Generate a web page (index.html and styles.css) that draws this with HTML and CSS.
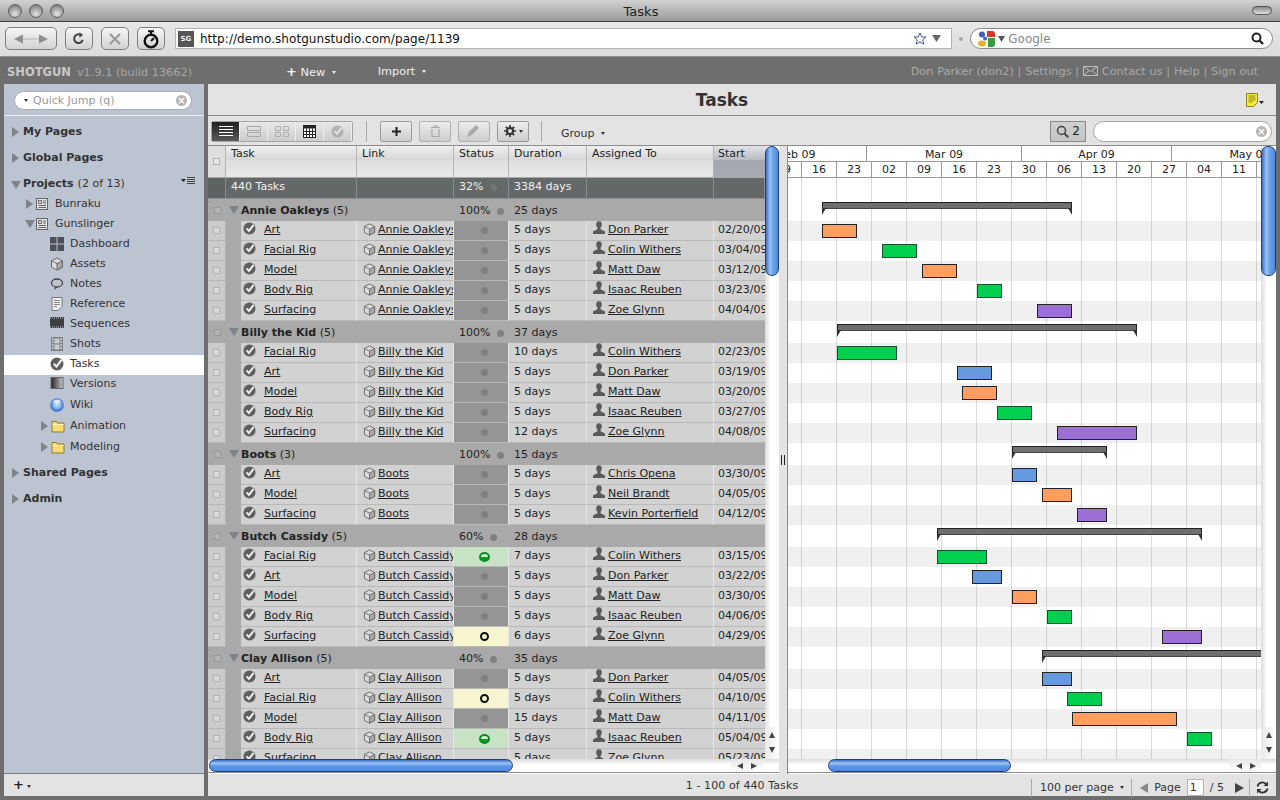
FILE: index.html
```html
<!DOCTYPE html>
<html lang="en">
<head>
<meta charset="utf-8">
<title>Tasks</title>
<link rel="stylesheet" href="styles.css">
</head>
<body>
<svg class="sprite" width="0" height="0" aria-hidden="true">
  <symbol id="check" viewBox="0 0 14 14"><circle cx="7" cy="7" r="6.500" fill="#5f5f5f"/><path d="M3.800 6.800l2.600 2.800L11.500 3" fill="none" stroke="#eee" stroke-width="2.100"/></symbol>
  <symbol id="cube" viewBox="0 0 14 14"><path d="M7 1l5.500 2.800v6.400L7 13l-5.500-2.800V3.800z" fill="#dcdcdc" stroke="#6a6a6a"/><path d="M7 6.600l5.500-2.800v6.400L7 13z" fill="#a8a8a8" stroke="#6a6a6a"/><path d="M1.500 3.800L7 6.600" fill="none" stroke="#6a6a6a"/></symbol>
  <symbol id="user" viewBox="0 0 14 14"><ellipse cx="7" cy="3.400" rx="2.800" ry="3.200" fill="#5a5a5a"/><path d="M5.400 6h3.200v2.200l4.400 2.200V13H1v-2.600l4.400-2.200z" fill="#5a5a5a"/></symbol>
  <symbol id="folder" viewBox="0 0 14 14"><path d="M1 2.500h4.500l1 1.500H13v9H1z" fill="#f8dc70" stroke="#8b7a36"/><path d="M1.500 5.500h11" stroke="#fff3b5"/></symbol>
  <symbol id="proj" viewBox="0 0 12 12"><rect x=".5" y=".5" width="11" height="11" fill="#e0e2e6" stroke="#666"/><path d="M2.500 2.500h3v3h-3zM7 3h3M7 5h3M2.500 7.500h7.500M2.500 9.500h7.500" stroke="#666" fill="none"/></symbol>
  <symbol id="tri-r" viewBox="0 0 8 10"><path d="M1 0l7 5-7 5z" fill="#7f838a"/></symbol>
  <symbol id="tri-d" viewBox="0 0 10 8"><path d="M0 0h10L5 8z" fill="#7f838a"/></symbol>
</svg>

<header class="titlebar">
  <div class="lights"><i class="light"></i><i class="light"></i><i class="light"></i></div>
  <div class="wintitle">Tasks</div>
  <i class="winpill"></i>
</header>

<nav class="browserbar">
  <div class="bbtn bb-hist">
    <svg width="34" height="10" viewBox="0 0 34 10"><path d="M9 4.500h16v1H9z" fill="#b4b4b4"/><path d="M0 5l9-4.500v9zM34 5l-9-4.500v9z" fill="#8e8e8e"/></svg>
  </div>
  <div class="bbtn bb-reload"><svg width="13" height="13" viewBox="0 0 14 14"><path d="M11.500 8.500A4.700 4.700 0 1 1 9.500 3.200" fill="none" stroke="#444" stroke-width="2.200"/><path d="M8 .2v6l4-3z" fill="#444"/></svg></div>
  <div class="bbtn bb-stop"><svg width="14" height="14" viewBox="0 0 14 14"><path d="M2 2l10 10M12 2L2 12" stroke="#9a9a9a" stroke-width="2.200"/></svg></div>
  <div class="bbtn bb-timer"><svg width="18" height="20" viewBox="0 0 18 20"><circle cx="9" cy="12" r="6.300" fill="none" stroke="#111" stroke-width="2.400"/><path d="M6 2.200h6M9 2.500v3M9 12l3-3" stroke="#111" stroke-width="2"/></svg></div>
  <div class="urlbar">
    <span class="favicon">SG</span>
    <span class="urltext">http://demo.shotgunstudio.com/page/1139</span>
    <svg class="star" width="14" height="14" viewBox="0 0 14 14"><path d="M7 1l1.800 4h4.200l-3.300 2.800 1.200 4.400L7 9.800l-3.900 2.400 1.200-4.400L1 5h4.200z" fill="#fff" stroke="#3d5a9e"/></svg>
    <svg class="urlcaret" width="9" height="7" viewBox="0 0 9 7"><path d="M0 0h9L4.500 7z" fill="#666"/></svg>
  </div>
  <i class="bb-dot"></i>
  <div class="googlebar">
    <svg width="18" height="16" viewBox="0 0 18 16"><rect x="0" y="0" width="18" height="16" rx="3" fill="#fff"/><path d="M10 0h5a3 3 0 0 1 3 3v3h-8z" fill="#d9332b"/><path d="M11 7h7v6a3 3 0 0 1-3 3h-4z" fill="#3b9a3e"/><circle cx="5" cy="3.500" r="3" fill="#3b62c4"/><circle cx="8" cy="7.500" r="2" fill="#3b62c4"/><ellipse cx="5" cy="12.500" rx="4" ry="3" fill="#eab12c"/></svg>
    <svg width="7" height="6" viewBox="0 0 7 6"><path d="M0 0h7L3.500 6z" fill="#555"/></svg>
    <span class="googletext">Google</span>
    <svg class="gmag" width="13" height="13" viewBox="0 0 13 13"><circle cx="5.500" cy="5.500" r="4" fill="none" stroke="#222" stroke-width="2"/><path d="M8.500 8.500l3.500 3.500" stroke="#222" stroke-width="2.400"/></svg>
  </div>
</nav>

<div class="app">
  <div class="appheader">
    <div class="brand"><b>SHOTGUN</b><span class="ver">v1.9.1 (build 13662)</span></div>
    <div class="appnav"><span class="nav-new"><b class="plus">+</b> New <i class="mini-caret"></i></span><span class="nav-import">Import <i class="mini-caret"></i></span></div>
    <div class="usernav">Don Parker (don2) | Settings | <svg class="mail" width="15" height="10" viewBox="0 0 15 10"><path d="M.5.500h14v9H.5zM.5.500L7.500 5.500 14.500.500M.5 9.500L6 4.500M14.500 9.500L9 4.500" fill="none" stroke="#bdbdbd"/></svg> Contact us | Help | Sign out</div>
  </div>

  <div class="workspace">
    <aside class="sidebar">
      <div class="side-top">
        <div class="quick"><i class="mini-caret dark"></i><span class="quick-text">Quick Jump (q)</span><i class="clear">×</i></div>
      </div>
      <div class="tree">
        <div class="sec"><svg class="arrow" width="8" height="10"><use href="#tri-r"/></svg><b>My Pages</b></div>
        <div class="sec"><svg class="arrow" width="8" height="10"><use href="#tri-r"/></svg><b>Global Pages</b></div>
        <div class="sec sec-open"><svg class="arrow" width="10" height="8"><use href="#tri-d"/></svg><b>Projects</b><span class="sec-count">(2 of 13)</span>
          <svg class="listmenu" width="14" height="9" viewBox="0 0 14 9"><path d="M0 2h5L2.500 5z" fill="#222"/><path d="M6 .5h8M6 2.500h8M6 4.500h8M6 6.500h8" stroke="#444"/></svg></div>
        <div class="node n-proj"><svg class="arrow" width="8" height="10"><use href="#tri-r"/></svg><svg class="nicon-s" width="12" height="12"><use href="#proj"/></svg>Bunraku</div>
        <div class="node n-proj"><svg class="arrow" width="10" height="8"><use href="#tri-d"/></svg><svg class="nicon-s" width="12" height="12"><use href="#proj"/></svg>Gunslinger</div>
        <div class="node"><svg class="nicon" width="14" height="14" viewBox="0 0 14 14"><path d="M0 0h6.500v6.500H0zM7.500 0H14v6.500H7.500zM0 7.500h6.500V14H0zM7.500 7.500H14V14H7.500z" fill="#4c5058"/></svg>Dashboard</div>
        <div class="node"><svg class="nicon" width="14" height="14"><use href="#cube"/></svg>Assets</div>
        <div class="node"><svg class="nicon" width="14" height="14" viewBox="0 0 14 14"><ellipse cx="7" cy="6" rx="5.500" ry="4" fill="none" stroke="#444" stroke-width="1.300"/><path d="M5 10l-.5 3 3-3" fill="#444"/></svg>Notes</div>
        <div class="node"><svg class="nicon" width="14" height="14" viewBox="0 0 14 14"><path d="M2 .5h10v9l-4 4H2z" fill="#eceef0" stroke="#777"/><path d="M4 3.500h6M4 5.500h6M4 7.500h6M4 9.500h3" stroke="#888"/></svg>Reference</div>
        <div class="node"><svg class="nicon" width="14" height="11" viewBox="0 0 14 11"><rect width="14" height="11" fill="#3c3e42"/><path d="M0 1h14M0 10h14" stroke="#cdd0d6" stroke-dasharray="1 1"/></svg>Sequences</div>
        <div class="node"><svg class="nicon" width="14" height="14" viewBox="0 0 14 14"><rect x="1" y="0" width="12" height="14" fill="#7c7f85"/><path d="M2 2h1.500M2 5h1.500M2 8h1.500M2 11h1.500M10.500 2H12M10.500 5H12M10.500 8H12M10.500 11H12" stroke="#e2e4e8" stroke-width="1.400"/><rect x="4.500" y="1.500" width="5" height="5" fill="#c8cbd1"/><rect x="4.500" y="7.500" width="5" height="5" fill="#c8cbd1"/></svg>Shots</div>
        <div class="node is-current"><svg class="nicon" width="14" height="14"><use href="#check"/></svg>Tasks</div>
        <div class="node"><svg class="nicon" width="13" height="12" viewBox="0 0 13 12"><defs><linearGradient id="vg"><stop offset="0" stop-color="#222"/><stop offset="1" stop-color="#c8c8c8"/></linearGradient></defs><rect x=".5" y=".5" width="12" height="11" fill="url(#vg)" stroke="#666"/></svg>Versions</div>
        <div class="node node-tall"><svg class="nicon" width="14" height="14" viewBox="0 0 14 14"><defs><radialGradient id="wg" cx=".5" cy=".45" r=".55"><stop offset="0" stop-color="#d8e9fb"/><stop offset=".55" stop-color="#7fb0ea"/><stop offset="1" stop-color="#1f5fc0"/></radialGradient></defs><circle cx="7" cy="7" r="6.800" fill="url(#wg)"/><ellipse cx="7" cy="3.500" rx="3.500" ry="1.800" fill="#eef6ff" opacity=".8"/></svg>Wiki</div>
        <div class="node node-tall n-folder"><svg class="arrow" width="8" height="10"><use href="#tri-r"/></svg><svg class="nicon-f" width="14" height="14"><use href="#folder"/></svg>Animation</div>
        <div class="node node-tall n-folder"><svg class="arrow" width="8" height="10"><use href="#tri-r"/></svg><svg class="nicon-f" width="14" height="14"><use href="#folder"/></svg>Modeling</div>
        <div class="sec sec-after"><svg class="arrow" width="8" height="10"><use href="#tri-r"/></svg><b>Shared Pages</b></div>
        <div class="sec"><svg class="arrow" width="8" height="10"><use href="#tri-r"/></svg><b>Admin</b></div>
      </div>
      <div class="side-foot"><b class="plus">+</b><i class="mini-caret dark"></i></div>
    </aside>

    <main class="content">
      <div class="pagetitle"><h1>Tasks</h1>
        <svg class="noteicon" width="18" height="14" viewBox="0 0 18 14"><path d="M.5.500h11v9l-4 4h-7z" fill="#f4ec3c" stroke="#8a8420"/><path d="M2.500 3h7M2.500 5h7M2.500 7h7M2.500 9h4" stroke="#8a8420"/><path d="M13 8h5l-2.500 3z" fill="#222"/></svg>
      </div>
      <div class="toolbar">
        <div class="seg">
          <span class="segb on"><svg width="14" height="11" viewBox="0 0 14 11"><path d="M0 .5h14M0 3.500h14M0 6.500h14M0 9.500h14" stroke="#fff"/></svg></span>
          <span class="segb"><svg width="14" height="11" viewBox="0 0 14 11"><path d="M.5.500h13v4H.5zM.5 6.500h13v4H.5z" fill="none" stroke="#a8a8a8"/></svg></span>
          <span class="segb"><svg width="14" height="11" viewBox="0 0 14 11"><path d="M.5.500h5v4h-5zM8.500.500h5v4h-5zM.5 6.500h5v4h-5zM8.500 6.500h5v4h-5z" fill="none" stroke="#b0b0b0"/></svg></span>
          <span class="segb"><svg width="13" height="13" viewBox="0 0 13 13"><rect x=".5" y=".5" width="12" height="12" fill="#fff" stroke="#222"/><rect x=".5" y=".5" width="12" height="3" fill="#222"/><path d="M3.500 3.500v9M6.500 3.500v9M9.500 3.500v9M.5 6.500h12M.5 9.500h12" stroke="#222"/></svg></span>
          <span class="segb"><svg width="13" height="13"><use href="#check" opacity=".32"/></svg></span>
        </div>
        <i class="tsep tsep-1"></i>
        <span class="tbtn"><svg width="11" height="11" viewBox="0 0 11 11"><path d="M5.500 1v9M1 5.500h9" stroke="#222" stroke-width="2"/></svg></span>
        <span class="tbtn off"><svg width="11" height="12" viewBox="0 0 11 12"><path d="M1 2.500h9M4 2.500V1h3v1.500M2 4v7.500h7V4" fill="none" stroke="#a8a8a8" stroke-width="1.200"/></svg></span>
        <span class="tbtn off"><svg width="16" height="14" viewBox="0 0 16 14"><path d="M1 13l2-5 7-7 3 3-7 7z" fill="#a8a8a8"/></svg></span>
        <span class="tbtn tbtn-gear"><svg width="12" height="12" viewBox="0 0 13 13"><circle cx="6.500" cy="6.500" r="3.300" fill="none" stroke="#333" stroke-width="2.200"/><path d="M6.500 0v3M6.500 10v3M0 6.500h3M10 6.500h3M1.900 1.900L4 4M9 9l2.100 2.100M11.100 1.900L9 4M4 9l-2.100 2.100" stroke="#333" stroke-width="1.800"/></svg><i class="mini-caret dark"></i></span>
        <i class="tsep tsep-2"></i>
        <span class="groupbtn">Group <i class="mini-caret dark"></i></span>
        <span class="tb-right">
          <span class="findbtn"><svg width="13" height="13" viewBox="0 0 13 13"><circle cx="5.500" cy="5.500" r="4" fill="none" stroke="#444" stroke-width="1.500"/><path d="M8.500 8.500l3.800 3.800" stroke="#444" stroke-width="2"/></svg>2</span>
          <span class="findbox"><i class="clear">×</i></span>
        </span>
      </div>

      <div class="panes">
        <section class="grid-pane">
          <div class="grid-view">
            <div class="row r-head">
              <div class="c c-chk"><i class="box"></i></div>
              <div class="c c-headtask">Task</div>
              <div class="c">Link</div><div class="c">Status</div><div class="c">Duration</div><div class="c">Assigned To</div><div class="c c-sorted">Start</div>
            </div>
            <div class="row r-sum">
              <div class="c c-chk"></div>
              <div class="c c-headtask">440 Tasks</div>
              <div class="c"></div><div class="c">32% <i class="gdot faint"></i></div><div class="c">3384 days</div><div class="c"></div><div class="c c-start"></div>
            </div>

            <div class="row r-group"><div class="c c-chk"><i class="box"></i></div><div class="c c-gname"><svg class="gtri" width="10" height="8"><use href="#tri-d"/></svg><b>Annie Oakleys</b> (5)</div><div class="c c-gstat">100% <i class="gdot"></i></div><div class="c">25 days</div></div>
            <div class="row"><div class="c c-chk"><i class="box"></i></div><div class="c c-ind"></div><div class="c c-task"><svg width="14" height="14"><use href="#check"/></svg><a>Art</a></div><div class="c c-link"><svg width="14" height="14"><use href="#cube"/></svg><a>Annie Oakleys</a></div><div class="c st st-na"><i></i></div><div class="c">5 days</div><div class="c c-who"><svg width="14" height="14"><use href="#user"/></svg><a>Don Parker</a></div><div class="c c-start">02/20/09</div></div>
            <div class="row"><div class="c c-chk"><i class="box"></i></div><div class="c c-ind"></div><div class="c c-task"><svg width="14" height="14"><use href="#check"/></svg><a>Facial Rig</a></div><div class="c c-link"><svg width="14" height="14"><use href="#cube"/></svg><a>Annie Oakleys</a></div><div class="c st st-na"><i></i></div><div class="c">5 days</div><div class="c c-who"><svg width="14" height="14"><use href="#user"/></svg><a>Colin Withers</a></div><div class="c c-start">03/04/09</div></div>
            <div class="row"><div class="c c-chk"><i class="box"></i></div><div class="c c-ind"></div><div class="c c-task"><svg width="14" height="14"><use href="#check"/></svg><a>Model</a></div><div class="c c-link"><svg width="14" height="14"><use href="#cube"/></svg><a>Annie Oakleys</a></div><div class="c st st-na"><i></i></div><div class="c">5 days</div><div class="c c-who"><svg width="14" height="14"><use href="#user"/></svg><a>Matt Daw</a></div><div class="c c-start">03/12/09</div></div>
            <div class="row"><div class="c c-chk"><i class="box"></i></div><div class="c c-ind"></div><div class="c c-task"><svg width="14" height="14"><use href="#check"/></svg><a>Body Rig</a></div><div class="c c-link"><svg width="14" height="14"><use href="#cube"/></svg><a>Annie Oakleys</a></div><div class="c st st-na"><i></i></div><div class="c">5 days</div><div class="c c-who"><svg width="14" height="14"><use href="#user"/></svg><a>Isaac Reuben</a></div><div class="c c-start">03/23/09</div></div>
            <div class="row"><div class="c c-chk"><i class="box"></i></div><div class="c c-ind"></div><div class="c c-task"><svg width="14" height="14"><use href="#check"/></svg><a>Surfacing</a></div><div class="c c-link"><svg width="14" height="14"><use href="#cube"/></svg><a>Annie Oakleys</a></div><div class="c st st-na"><i></i></div><div class="c">5 days</div><div class="c c-who"><svg width="14" height="14"><use href="#user"/></svg><a>Zoe Glynn</a></div><div class="c c-start">04/04/09</div></div>

            <div class="row r-group"><div class="c c-chk"><i class="box"></i></div><div class="c c-gname"><svg class="gtri" width="10" height="8"><use href="#tri-d"/></svg><b>Billy the Kid</b> (5)</div><div class="c c-gstat">100% <i class="gdot"></i></div><div class="c">37 days</div></div>
            <div class="row"><div class="c c-chk"><i class="box"></i></div><div class="c c-ind"></div><div class="c c-task"><svg width="14" height="14"><use href="#check"/></svg><a>Facial Rig</a></div><div class="c c-link"><svg width="14" height="14"><use href="#cube"/></svg><a>Billy the Kid</a></div><div class="c st st-na"><i></i></div><div class="c">10 days</div><div class="c c-who"><svg width="14" height="14"><use href="#user"/></svg><a>Colin Withers</a></div><div class="c c-start">02/23/09</div></div>
            <div class="row"><div class="c c-chk"><i class="box"></i></div><div class="c c-ind"></div><div class="c c-task"><svg width="14" height="14"><use href="#check"/></svg><a>Art</a></div><div class="c c-link"><svg width="14" height="14"><use href="#cube"/></svg><a>Billy the Kid</a></div><div class="c st st-na"><i></i></div><div class="c">5 days</div><div class="c c-who"><svg width="14" height="14"><use href="#user"/></svg><a>Don Parker</a></div><div class="c c-start">03/19/09</div></div>
            <div class="row"><div class="c c-chk"><i class="box"></i></div><div class="c c-ind"></div><div class="c c-task"><svg width="14" height="14"><use href="#check"/></svg><a>Model</a></div><div class="c c-link"><svg width="14" height="14"><use href="#cube"/></svg><a>Billy the Kid</a></div><div class="c st st-na"><i></i></div><div class="c">5 days</div><div class="c c-who"><svg width="14" height="14"><use href="#user"/></svg><a>Matt Daw</a></div><div class="c c-start">03/20/09</div></div>
            <div class="row"><div class="c c-chk"><i class="box"></i></div><div class="c c-ind"></div><div class="c c-task"><svg width="14" height="14"><use href="#check"/></svg><a>Body Rig</a></div><div class="c c-link"><svg width="14" height="14"><use href="#cube"/></svg><a>Billy the Kid</a></div><div class="c st st-na"><i></i></div><div class="c">5 days</div><div class="c c-who"><svg width="14" height="14"><use href="#user"/></svg><a>Isaac Reuben</a></div><div class="c c-start">03/27/09</div></div>
            <div class="row"><div class="c c-chk"><i class="box"></i></div><div class="c c-ind"></div><div class="c c-task"><svg width="14" height="14"><use href="#check"/></svg><a>Surfacing</a></div><div class="c c-link"><svg width="14" height="14"><use href="#cube"/></svg><a>Billy the Kid</a></div><div class="c st st-na"><i></i></div><div class="c">12 days</div><div class="c c-who"><svg width="14" height="14"><use href="#user"/></svg><a>Zoe Glynn</a></div><div class="c c-start">04/08/09</div></div>

            <div class="row r-group"><div class="c c-chk"><i class="box"></i></div><div class="c c-gname"><svg class="gtri" width="10" height="8"><use href="#tri-d"/></svg><b>Boots</b> (3)</div><div class="c c-gstat">100% <i class="gdot"></i></div><div class="c">15 days</div></div>
            <div class="row"><div class="c c-chk"><i class="box"></i></div><div class="c c-ind"></div><div class="c c-task"><svg width="14" height="14"><use href="#check"/></svg><a>Art</a></div><div class="c c-link"><svg width="14" height="14"><use href="#cube"/></svg><a>Boots</a></div><div class="c st st-na"><i></i></div><div class="c">5 days</div><div class="c c-who"><svg width="14" height="14"><use href="#user"/></svg><a>Chris Opena</a></div><div class="c c-start">03/30/09</div></div>
            <div class="row"><div class="c c-chk"><i class="box"></i></div><div class="c c-ind"></div><div class="c c-task"><svg width="14" height="14"><use href="#check"/></svg><a>Model</a></div><div class="c c-link"><svg width="14" height="14"><use href="#cube"/></svg><a>Boots</a></div><div class="c st st-na"><i></i></div><div class="c">5 days</div><div class="c c-who"><svg width="14" height="14"><use href="#user"/></svg><a>Neil Brandt</a></div><div class="c c-start">04/05/09</div></div>
            <div class="row"><div class="c c-chk"><i class="box"></i></div><div class="c c-ind"></div><div class="c c-task"><svg width="14" height="14"><use href="#check"/></svg><a>Surfacing</a></div><div class="c c-link"><svg width="14" height="14"><use href="#cube"/></svg><a>Boots</a></div><div class="c st st-na"><i></i></div><div class="c">5 days</div><div class="c c-who"><svg width="14" height="14"><use href="#user"/></svg><a>Kevin Porterfield</a></div><div class="c c-start">04/12/09</div></div>

            <div class="row r-group"><div class="c c-chk"><i class="box"></i></div><div class="c c-gname"><svg class="gtri" width="10" height="8"><use href="#tri-d"/></svg><b>Butch Cassidy</b> (5)</div><div class="c c-gstat">60% <i class="gdot"></i></div><div class="c">28 days</div></div>
            <div class="row"><div class="c c-chk"><i class="box"></i></div><div class="c c-ind"></div><div class="c c-task"><svg width="14" height="14"><use href="#check"/></svg><a>Facial Rig</a></div><div class="c c-link"><svg width="14" height="14"><use href="#cube"/></svg><a>Butch Cassidy</a></div><div class="c st st-ip"><i></i></div><div class="c">7 days</div><div class="c c-who"><svg width="14" height="14"><use href="#user"/></svg><a>Colin Withers</a></div><div class="c c-start">03/15/09</div></div>
            <div class="row"><div class="c c-chk"><i class="box"></i></div><div class="c c-ind"></div><div class="c c-task"><svg width="14" height="14"><use href="#check"/></svg><a>Art</a></div><div class="c c-link"><svg width="14" height="14"><use href="#cube"/></svg><a>Butch Cassidy</a></div><div class="c st st-na"><i></i></div><div class="c">5 days</div><div class="c c-who"><svg width="14" height="14"><use href="#user"/></svg><a>Don Parker</a></div><div class="c c-start">03/22/09</div></div>
            <div class="row"><div class="c c-chk"><i class="box"></i></div><div class="c c-ind"></div><div class="c c-task"><svg width="14" height="14"><use href="#check"/></svg><a>Model</a></div><div class="c c-link"><svg width="14" height="14"><use href="#cube"/></svg><a>Butch Cassidy</a></div><div class="c st st-na"><i></i></div><div class="c">5 days</div><div class="c c-who"><svg width="14" height="14"><use href="#user"/></svg><a>Matt Daw</a></div><div class="c c-start">03/30/09</div></div>
            <div class="row"><div class="c c-chk"><i class="box"></i></div><div class="c c-ind"></div><div class="c c-task"><svg width="14" height="14"><use href="#check"/></svg><a>Body Rig</a></div><div class="c c-link"><svg width="14" height="14"><use href="#cube"/></svg><a>Butch Cassidy</a></div><div class="c st st-na"><i></i></div><div class="c">5 days</div><div class="c c-who"><svg width="14" height="14"><use href="#user"/></svg><a>Isaac Reuben</a></div><div class="c c-start">04/06/09</div></div>
            <div class="row"><div class="c c-chk"><i class="box"></i></div><div class="c c-ind"></div><div class="c c-task"><svg width="14" height="14"><use href="#check"/></svg><a>Surfacing</a></div><div class="c c-link"><svg width="14" height="14"><use href="#cube"/></svg><a>Butch Cassidy</a></div><div class="c st st-wt"><i></i></div><div class="c">6 days</div><div class="c c-who"><svg width="14" height="14"><use href="#user"/></svg><a>Zoe Glynn</a></div><div class="c c-start">04/29/09</div></div>

            <div class="row r-group"><div class="c c-chk"><i class="box"></i></div><div class="c c-gname"><svg class="gtri" width="10" height="8"><use href="#tri-d"/></svg><b>Clay Allison</b> (5)</div><div class="c c-gstat">40% <i class="gdot"></i></div><div class="c">35 days</div></div>
            <div class="row"><div class="c c-chk"><i class="box"></i></div><div class="c c-ind"></div><div class="c c-task"><svg width="14" height="14"><use href="#check"/></svg><a>Art</a></div><div class="c c-link"><svg width="14" height="14"><use href="#cube"/></svg><a>Clay Allison</a></div><div class="c st st-na"><i></i></div><div class="c">5 days</div><div class="c c-who"><svg width="14" height="14"><use href="#user"/></svg><a>Don Parker</a></div><div class="c c-start">04/05/09</div></div>
            <div class="row"><div class="c c-chk"><i class="box"></i></div><div class="c c-ind"></div><div class="c c-task"><svg width="14" height="14"><use href="#check"/></svg><a>Facial Rig</a></div><div class="c c-link"><svg width="14" height="14"><use href="#cube"/></svg><a>Clay Allison</a></div><div class="c st st-wt"><i></i></div><div class="c">5 days</div><div class="c c-who"><svg width="14" height="14"><use href="#user"/></svg><a>Colin Withers</a></div><div class="c c-start">04/10/09</div></div>
            <div class="row"><div class="c c-chk"><i class="box"></i></div><div class="c c-ind"></div><div class="c c-task"><svg width="14" height="14"><use href="#check"/></svg><a>Model</a></div><div class="c c-link"><svg width="14" height="14"><use href="#cube"/></svg><a>Clay Allison</a></div><div class="c st st-na"><i></i></div><div class="c">15 days</div><div class="c c-who"><svg width="14" height="14"><use href="#user"/></svg><a>Matt Daw</a></div><div class="c c-start">04/11/09</div></div>
            <div class="row"><div class="c c-chk"><i class="box"></i></div><div class="c c-ind"></div><div class="c c-task"><svg width="14" height="14"><use href="#check"/></svg><a>Body Rig</a></div><div class="c c-link"><svg width="14" height="14"><use href="#cube"/></svg><a>Clay Allison</a></div><div class="c st st-ip"><i></i></div><div class="c">5 days</div><div class="c c-who"><svg width="14" height="14"><use href="#user"/></svg><a>Isaac Reuben</a></div><div class="c c-start">05/04/09</div></div>
            <div class="row"><div class="c c-chk"><i class="box"></i></div><div class="c c-ind"></div><div class="c c-task"><svg width="14" height="14"><use href="#check"/></svg><a>Surfacing</a></div><div class="c c-link"><svg width="14" height="14"><use href="#cube"/></svg><a>Clay Allison</a></div><div class="c st"><span>-</span></div><div class="c">5 days</div><div class="c c-who"><svg width="14" height="14"><use href="#user"/></svg><a>Zoe Glynn</a></div><div class="c c-start">05/23/09</div></div>
          </div>
          <div class="vbar"><span class="vthumb"></span><span class="vbtns"><i class="up"></i><i class="down"></i></span></div>
          <div class="hbar hbar-grid"><span class="hthumb"></span><span class="hbtns"><i class="left"></i><i class="right"></i></span></div>
        </section>

        <div class="splitter"><i></i></div>

        <section class="gantt-pane">
          <div class="gantt-view">
            <div class="months">
              <span class="mo mo-feb">Feb 09</span><span class="mo mo-mar">Mar 09</span><span class="mo mo-apr">Apr 09</span><span class="mo mo-may">May 09</span>
            </div>
            <div class="weeks">
              <span class="wk wk-first">09</span><span class="wk">16</span><span class="wk">23</span><span class="wk">02</span><span class="wk">09</span><span class="wk">16</span><span class="wk">23</span><span class="wk">30</span><span class="wk">06</span><span class="wk">13</span><span class="wk">20</span><span class="wk">27</span><span class="wk">04</span><span class="wk">11</span><span class="wk">18</span>
            </div>
            <div class="gbody">
              <div class="gr gr-sum"></div>
              <div class="gr gr-g"><div class="sum" style="margin-left:34px;width:250px"></div></div>
              <div class="gr alt"><div class="bar orange" style="margin-left:34px;width:35px"></div></div>
              <div class="gr"><div class="bar green" style="margin-left:94px;width:35px"></div></div>
              <div class="gr alt"><div class="bar orange" style="margin-left:134px;width:35px"></div></div>
              <div class="gr"><div class="bar green" style="margin-left:189px;width:25px"></div></div>
              <div class="gr alt"><div class="bar purple" style="margin-left:249px;width:35px"></div></div>

              <div class="gr gr-g"><div class="sum" style="margin-left:49px;width:300px"></div></div>
              <div class="gr alt"><div class="bar green" style="margin-left:49px;width:60px"></div></div>
              <div class="gr"><div class="bar blue" style="margin-left:169px;width:35px"></div></div>
              <div class="gr alt"><div class="bar orange" style="margin-left:174px;width:35px"></div></div>
              <div class="gr"><div class="bar green" style="margin-left:209px;width:35px"></div></div>
              <div class="gr alt"><div class="bar purple" style="margin-left:269px;width:80px"></div></div>

              <div class="gr gr-g"><div class="sum" style="margin-left:224px;width:95px"></div></div>
              <div class="gr alt"><div class="bar blue" style="margin-left:224px;width:25px"></div></div>
              <div class="gr"><div class="bar orange" style="margin-left:254px;width:30px"></div></div>
              <div class="gr alt"><div class="bar purple" style="margin-left:289px;width:30px"></div></div>

              <div class="gr gr-g"><div class="sum" style="margin-left:149px;width:265px"></div></div>
              <div class="gr alt"><div class="bar green" style="margin-left:149px;width:50px"></div></div>
              <div class="gr"><div class="bar blue" style="margin-left:184px;width:30px"></div></div>
              <div class="gr alt"><div class="bar orange" style="margin-left:224px;width:25px"></div></div>
              <div class="gr"><div class="bar green" style="margin-left:259px;width:25px"></div></div>
              <div class="gr alt"><div class="bar purple" style="margin-left:374px;width:40px"></div></div>

              <div class="gr gr-g"><div class="sum" style="margin-left:254px;width:400px"></div></div>
              <div class="gr alt"><div class="bar blue" style="margin-left:254px;width:30px"></div></div>
              <div class="gr"><div class="bar green" style="margin-left:279px;width:35px"></div></div>
              <div class="gr alt"><div class="bar orange" style="margin-left:284px;width:105px"></div></div>
              <div class="gr"><div class="bar green" style="margin-left:399px;width:25px"></div></div>
              <div class="gr alt"></div>
            </div>
          </div>
          <div class="vbar"><span class="vthumb"></span><span class="vbtns"><i class="up"></i><i class="down"></i></span></div>
          <div class="hbar hbar-gantt"><span class="hthumb"></span><span class="hbtns"><i class="left"></i><i class="right"></i></span></div>
        </section>
      </div>

      <footer class="pager">
        <span class="pager-spacer"></span>
        <span class="pager-count">1 - 100 of 440 Tasks</span>
        <span class="pager-ctl">
          <i class="psep"></i><span class="per">100 per page <i class="mini-caret dark"></i></span><i class="psep"></i>
          <i class="pg-prev"></i><span class="pg-label">Page</span><span class="pg-input">1</span><span class="pg-total">/ 5</span><i class="pg-next"></i><i class="psep"></i>
          <svg class="pg-refresh" width="13" height="13" viewBox="0 0 13 13"><path d="M1.500 5.500A5 5 0 0 1 10.500 3.500M11.500 7.500A5 5 0 0 1 2.500 9.500" fill="none" stroke="#333" stroke-width="1.800"/><path d="M12 .5v4.500H7.500zM1 12.500V8h4.500z" fill="#333"/></svg>
        </span>
      </footer>
    </main>
  </div>
</div>
</body>
</html>
```

FILE: styles.css
```css
* { box-sizing: border-box; }
html, body { margin: 0; height: 100%; }
body {
  width: 1280px;
  height: 800px;
  overflow: hidden;
  display: flex;
  flex-direction: column;
  font: 11px/16px "DejaVu Sans", Verdana, sans-serif;
  color: #222;
  background: #6e6e6e;
}
i { font-style: normal; display: inline-block; }
.sprite { position: absolute; }

/* window chrome */
.titlebar {
  height: 22px;
  flex: none;
  display: flex;
  align-items: center;
  padding: 0 8px;
  background: linear-gradient(#d2d2d2, #9a9a9a);
  border-bottom: 1px solid #3f3f3f;
  font: 13px "DejaVu Sans", sans-serif;
}
.lights { display: flex; gap: 7px; }
.light {
  width: 14px; height: 14px; border-radius: 50%;
  border: 1px solid #5e5e5e;
  background: radial-gradient(circle at 50% 75%, #e4e4e4, #9b9b9b 60%, #6d6d6d);
}
.wintitle { flex: 1; text-align: center; padding: 1px 34px 0 0; color: #222; }
.winpill {
  width: 20px; height: 9px; border-radius: 5px; border: 1px solid #555;
  background: linear-gradient(#888, #e0e0e0);
}
.browserbar {
  height: 35px; flex: none;
  display: flex; align-items: center;
  padding: 0 7px 1px 5px;
  background: linear-gradient(#e8e8e8, #dcdcdc);
  border-bottom: 1px solid #8e8e8e;
}
.bbtn {
  height: 23px;
  display: flex; align-items: center; justify-content: center;
  border: 1px solid #7e7e7e; border-radius: 5px;
  background: linear-gradient(#f6f6f6, #d2d2d2);
}
.bb-hist { width: 52px; margin-right: 8px; }
.bb-reload { width: 28px; margin-right: 8px; }
.bb-stop { width: 28px; margin-right: 8px; }
.bb-timer { width: 28px; margin-right: 10px; }
.urlbar {
  width: 778px; height: 21px;
  display: flex; align-items: center;
  border: 1px solid #b4b4b4;
  background: #fff;
  padding: 0 10px 0 2px;
}
.favicon {
  width: 16px; height: 16px;
  background: #555; color: #eee;
  font: bold 7px/16px "DejaVu Sans", sans-serif;
  text-align: center;
  margin-right: 6px;
}
.urltext { flex: 1; font-size: 12px; color: #111; letter-spacing: .06px; }
.star { margin-right: 5px; }
.bb-dot { width: 4px; height: 4px; border-radius: 50%; background: #a8a8a8; margin: 0 7px; }
.googlebar {
  width: 303px; height: 21px;
  display: flex; align-items: center; gap: 3px;
  border: 1px solid #8a8a8a; border-radius: 11px;
  background: #fff;
  padding: 0 8px 0 6px;
  color: #888;
  font-size: 12px;
}
.googletext { flex: 1; }

.app { flex: 1; min-height: 0; display: flex; flex-direction: column; }
.appheader {
  height: 27px; flex: none;
  display: flex; align-items: center;
  padding: 3px 22px 0 7px;
  background: #6e6e6e;
  color: #b0b0b0;
  font-size: 11.300px;
}
.brand { width: 279px; white-space: nowrap; }
.brand b { color: #c8c8c8; margin-right: 6px; font-size: 11.500px; }
.ver { color: #a6a6a6; }
.appnav { color: #f0f0f0; display: flex; gap: 42px; }
.plus { font-size: 13px; font-weight: bold; }
.mini-caret {
  width: 0; height: 0; margin-left: 3px;
  border: 2.500px solid transparent; border-top: 3px solid currentColor; border-bottom: 0;
  vertical-align: middle;
}
.dark { color: #333; }
.usernav { margin-left: auto; color: #a9a9a9; white-space: nowrap; word-spacing: .2px; }
.mail { vertical-align: -1px; }

.workspace { flex: 1; min-height: 0; display: flex; padding: 0 4px 4px; gap: 4px; }

/* sidebar */
.sidebar {
  width: 200px; flex: none;
  display: flex; flex-direction: column;
  background: #bdc4d1;
}
.side-top { height: 32px; padding: 7px 12px 0 10px; border-bottom: 1px solid #eef0f3; flex: none; }
.quick {
  height: 19px; border-radius: 10px; border: 1px solid #a6abb3;
  background: #fff;
  display: flex; align-items: center;
  padding: 0 4px 0 6px;
  color: #9a9a9a;
}
.quick-text { flex: 1; margin-left: 5px; white-space: nowrap; }
.clear {
  width: 11px; height: 11px; border-radius: 50%;
  background: #b5b5b5; color: #fff;
  font: bold 10px/11px "DejaVu Sans", sans-serif; text-align: center;
}
.tree { flex: 1; padding-top: 3px; }
.sec {
  height: 26px; display: flex; align-items: center;
  padding-left: 7px; color: #333; position: relative;
}
.sec .arrow { margin-right: 4px; width: 8px; flex: none; }
.sec-open { height: 24px; align-items: flex-start; line-height: 26px; }
.sec-open .arrow { margin-top: 10px; width: 10px; margin-right: 2px; }
.sec-count { margin-left: 4px; }
.listmenu { margin-left: auto; margin-right: 9px; margin-top: 6px; }
.sec-after { margin-top: 2px; }
.node {
  height: 20px; display: flex; align-items: flex-start; line-height: 18px;
  padding-left: 46px; color: #333; white-space: nowrap;
}
.node-tall { height: 21px; line-height: 20px; }
.nicon { width: 14px; margin-right: 6px; margin-top: 2px; flex: none; }
.node-tall .nicon { margin-top: 3px; }
.is-current { background: #fff; }
.n-proj { padding-left: 21px; }
.n-proj .arrow { margin-top: 4px; margin-right: 3px; flex: none; }
.n-proj .nicon-s { margin-left: 0; margin-right: 7px; margin-top: 3px; flex: none; }
.n-proj svg.arrow[width="10"] { margin-right: 1px; margin-top: 5px; }
.n-folder { padding-left: 36px; }
.n-folder .arrow { margin-top: 5px; margin-right: 3px; flex: none; }
.n-folder .nicon-f { margin-right: 5px; margin-top: 3px; flex: none; }
.side-foot {
  height: 23px; flex: none;
  background: #e3e3e3; border-top: 1px solid #7c7c7c;
  padding-left: 9px; line-height: 22px;
}

/* content */
.content {
  flex: 1; min-width: 0;
  display: flex; flex-direction: column;
  background: #e3e3e3;
}
.pagetitle {
  height: 32px; flex: none;
  display: flex; align-items: center;
  padding: 0 12px 0 0;
  border-bottom: 1px solid #8a8a8a;
}
.pagetitle h1 { flex: 1; margin: 0; text-align: center; font-size: 17px; padding-left: 12px; padding-right: 22px; color: #333; }
.noteicon { flex: none; }
.toolbar {
  height: 30px; flex: none;
  display: flex; align-items: center;
  padding: 1px 0 0 3px;
  border-bottom: 1px solid #8c8c8c;
}
.seg { display: flex; height: 21px; border: 1px solid #a5a5a5; border-radius: 2px; }
.segb {
  width: 28px; display: flex; align-items: center; justify-content: center;
  background: linear-gradient(#e8e8e8, #cdcdcd);
  border-right: 1px solid #efefef;
}
.segb.on { background: linear-gradient(#1f1f1f, #5a5a5a); }
.tsep { width: 1px; height: 21px; background: #a8a8a8; }
.tsep-1 { margin: 0 13px; }
.tbtn {
  width: 32px; height: 21px; margin-right: 7px;
  display: flex; align-items: center; justify-content: center;
  border: 1px solid #9a9a9a; border-radius: 2px;
  background: linear-gradient(#ededed, #cdcdcd);
}
.tbtn.off { border-color: #b0b0b0; }
.tbtn-gear { margin-right: 12px; }
.tsep-2 { margin-right: 19px; }
.groupbtn { color: #333; margin-top: 5px; }
.tb-right { margin-left: auto; display: flex; gap: 7px; padding-right: 4px; }
.findbtn {
  width: 36px; height: 21px;
  display: flex; align-items: center; justify-content: center; gap: 3px;
  border: 1px solid #888;
  background: linear-gradient(#d0d0d0, #c4c4c4);
  font-size: 12px;
}
.findbox {
  width: 179px; height: 21px; border-radius: 11px; border: 1px solid #a2a2a2;
  background: #fff;
  display: flex; align-items: center; justify-content: flex-end; padding-right: 4px;
}

/* panes */
.panes { flex: 1; min-height: 0; display: flex; }
.grid-pane, .gantt-pane { display: grid; grid-template-rows: 613px 14px; background: #fff; }
.grid-pane { width: 571px; grid-template-columns: 557px 14px; }
.gantt-pane { flex: 1; grid-template-columns: 473px 15px; border-left: 1px solid #8a8a8a; }
.splitter {
  width: 8px; flex: none;
  display: flex; align-items: center; justify-content: center;
  background: #e3e3e3;
}
.splitter i { width: 4px; height: 10px; border-left: 1px solid #222; border-right: 1px solid #222; }

.grid-view { overflow: hidden; background: #fff; }
.row {
  display: grid;
  grid-template-columns: 18px 15px 116px 97px 55px 78px 127px 51px;
  height: 20px;
  background: #d2d2d2;
  white-space: nowrap;
}
.c {
  padding-left: 5px;
  border-right: 1px solid #e6e6e6;
  border-bottom: 1px solid #b9b9b9;
  overflow: hidden;
  line-height: 17px;
}
.c-chk { padding: 0; display: flex; align-items: center; justify-content: center; background: #cbcbcb; border-right-color: #b0b0b0; }
.box { width: 7px; height: 7px; border: 1px solid #b3b3b3; background: #dadada; }
.c-ind { padding: 0; background: #a9a9a9; border: 0; }
.c-task { padding-left: 2px; display: flex; align-items: flex-start; }
.c-task svg { width: 13px; height: 13px; margin-top: 1px; margin-right: 8px; flex: none; }
a { color: #222; text-decoration: underline; }
.c-link { display: flex; padding-left: 6px; }
.c-link svg { width: 13px; height: 13px; margin-top: 2px; margin-right: 2px; flex: none; }
.c-who { display: flex; }
.c-who svg { margin-top: 0; margin-right: 2px; flex: none; }
.c-start { padding-left: 4px; border-right: 0; }
.st { display: flex; align-items: center; justify-content: center; padding: 0 0 0 6px; }
.st-na { background: #959595; }
.st-na i { width: 7px; height: 7px; border-radius: 50%; background: #7f7f7f; }
.st-ip { background: #c8e2c6; }
.st-ip i { width: 11px; height: 10px; border-radius: 50%; border: 2px solid #0a8a1e; background: linear-gradient(#d8f0d6 45%, #0a9a22 45%); }
.st-wt { background: #f7f5d0; }
.st-wt i { width: 9px; height: 9px; border-radius: 50%; border: 2px solid #111; background: #f7f5d0; }

.r-head { height: 32px; }
.r-head .c {
  background: linear-gradient(#f0f0f0, #d6d6d6 14px, #dedede 14px, #e8e8e8);
  line-height: 15px;
  border-bottom: 1px solid #a8a8a8;
  border-right: 1px solid #b4b4b4;
}
.r-head .c-chk { background: #dedede; }
.r-head .box { background: #e8e8e8; }
.c-headtask { grid-column: span 2; }
.r-head .c-sorted { background: linear-gradient(#e2e3e6, #b8bbc2 14px, #a2a6ae 14px, #a6aab2); border-right: 0; padding-left: 4px; }
.r-sum { height: 21px; background: #646868; color: #f0f0f0; font-size: 11px; }
.r-sum .c { background: #646868; border-right: 1px solid #8a8d8d; border-bottom: 1px solid #8f8f8f; line-height: 18px; }
.r-sum .c-chk { background: #5e6262; }
.gdot { width: 7px; height: 7px; border-radius: 50%; background: #808080; margin-left: 3px; vertical-align: -1px; }
.gdot.faint { background: #6f7575; }
.r-group {
  height: 22px;
  background: #a9a9a9;
  grid-template-columns: 18px 228px 55px 78px;
  color: #222;
}
.r-group .c { border: 0; line-height: 23px; }
.r-group .c-chk { background: #a9a9a9; }
.r-group .box { background: #b4b4b4; border-color: #979797; }
.c-gname { padding-left: 3px; }
.gtri { margin-right: 2px; }

/* scrollbars */
.vbar {
  display: flex; flex-direction: column; justify-content: space-between;
  background: linear-gradient(90deg, #dcdcdc, #fff 40%);
  grid-row: 1;
  grid-column: 2;
}
.vthumb {
  display: block; height: 130px; border-radius: 7px;
  border: 1px solid #1f3f85;
  background: linear-gradient(90deg, #3d6fc8, #9cc4f3 35%, #6ea6ec 55%, #4d88dd);
}
.vbtns { display: flex; flex-direction: column; align-items: center; gap: 9px; height: 32px; padding-top: 5px; background: linear-gradient(90deg, #e8e8e8, #fff); }
.up { border: 3.500px solid transparent; border-bottom: 6px solid #444; border-top: 0; }
.down { border: 3.500px solid transparent; border-top: 6px solid #444; border-bottom: 0; }
.hbar {
  grid-row: 2; grid-column: 1 / span 2;
  display: flex; align-items: center; position: relative;
  background: linear-gradient(#dcdcdc, #fff 45%);
  border-bottom: 1px solid #8c8c8c;
}
.hthumb {
  height: 13px; border-radius: 7px;
  border: 1px solid #1f3f85;
  background: linear-gradient(#3d6fc8, #9cc4f3 30%, #5c98ea 55%, #4d88dd);
}
.hbar-grid .hthumb { width: 304px; margin-left: 1px; }
.hbar-gantt .hthumb { width: 183px; margin-left: 40px; }
.hbtns { margin-left: auto; width: 31px; height: 13px; display: flex; align-items: center; justify-content: center; gap: 8px; background: linear-gradient(#e8e8e8, #fff); }
.hbar-grid .hbtns { margin-right: 17px; }
.hbar-gantt .hbtns { margin-right: 15px; }
.left { border: 3.500px solid transparent; border-right: 6px solid #444; border-left: 0; }
.right { border: 3.500px solid transparent; border-left: 6px solid #444; border-right: 0; }

/* gantt */
.gantt-view { overflow: hidden; background: #fff; }
.months, .weeks { display: flex; white-space: nowrap; text-align: center; }
.months { height: 16px; border-bottom: 1px solid #999; line-height: 17px; }
.weeks { height: 16px; border-bottom: 1px solid #999; line-height: 16px; }
.mo { flex: none; border-right: 1px solid #999; }
.mo-feb { width: 139px; margin-left: -60px; }
.mo-mar { width: 155px; }
.mo-apr { width: 150px; }
.mo-may { width: 155px; border-right: 0; }
.wk { width: 35px; flex: none; border-right: 1px solid #999; }
.wk-first { margin-left: -21px; }
.gbody {
  background: linear-gradient(90deg, transparent 13px, #dcdcdc 13px, #dcdcdc 14px, transparent 14px) 0 0 / 35px 100% repeat-x;
  height: 581px;
  overflow: hidden;
}
.gr { height: 20px; padding-top: 3px; overflow: hidden; }
.gr.alt { background: rgba(0, 0, 0, .06); }
.gr-sum { height: 21px; }
.gr-g { height: 22px; padding-top: 3px; overflow: visible; }
.bar { height: 14px; border: 1px solid #222; }
.orange { background: #ff9e5e; }
.green { background: #00d050; border-color: #155030; }
.blue { background: #6699dd; }
.purple { background: #9b6fd4; }
.sum { height: 7px; background: #6e6e6e; border: 1px solid #222; border-bottom-color: #444; position: relative; }
.sum::before, .sum::after {
  content: ""; position: absolute; top: 100%; width: 0; height: 0;
  border-top: 7px solid #333;
}
.sum::before { left: -1px; border-right: 4px solid transparent; }
.sum::after { right: -1px; border-left: 4px solid transparent; }

/* pager */
.pager {
  height: 22px; flex: none;
  display: grid; grid-template-columns: 1fr auto 1fr;
  align-items: center;
  color: #333;
}
.pager-count { line-height: 24px; letter-spacing: .1px; }
.pager-ctl { display: flex; align-items: center; justify-content: flex-end; height: 22px; padding-right: 7px; padding-top: 3px; }
.psep { width: 1px; height: 18px; background: #aaa; }
.per { padding: 0 7px 0 8px; white-space: nowrap; }
.pg-prev { border: 5px solid transparent; border-right: 8px solid #888; border-left: 0; margin-left: 8px; margin-right: 6px; }
.pg-input { width: 17px; height: 17px; border: 1px solid #b5b5b5; background: #fff; line-height: 15px; padding-left: 2px; margin: 0 6px; }
.pg-total { margin-right: 11px; }
.pg-next { border: 5px solid transparent; border-left: 9px solid #444; border-right: 0; margin-right: 5px; }
.pg-refresh { margin-left: 6px; }
```
